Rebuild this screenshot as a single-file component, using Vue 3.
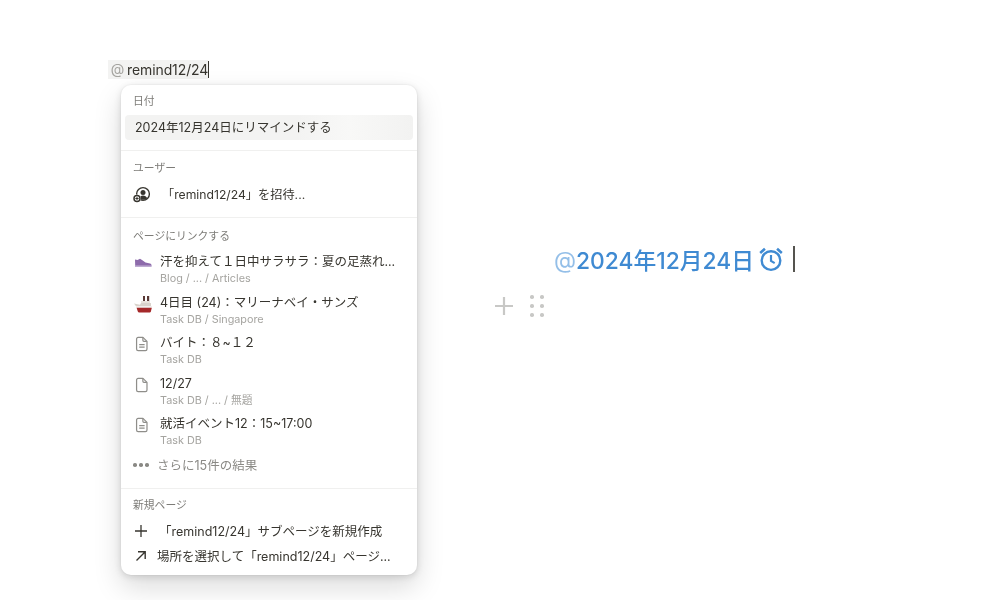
<script setup>
const pages = [
  { icon: 'shoe', title: '汗を抑えて１日中サラサラ：夏の足蒸れ...', path: 'Blog / ... / Articles' },
  { icon: 'ship', title: '4日目 (24)：マリーナベイ・サンズ', path: 'Task DB / Singapore' },
  { icon: 'doc', title: 'バイト：８~１２', path: 'Task DB' },
  { icon: 'blank', title: '12/27', path: 'Task DB / ... / 無題' },
  { icon: 'doc', title: '就活イベント12：15~17:00', path: 'Task DB' },
]
</script>

<template>
  <div class="page">
    <div class="left">
      <div class="query"><span class="at">@</span><span class="qtext">remind12/24</span><span class="caret"></span></div>
      <div class="menu">
        <section class="sec sec-date">
          <div class="label">日付</div>
          <div class="row hl">2024年12月24日にリマインドする</div>
        </section>
        <section class="sec sec-user">
          <div class="label">ユーザー</div>
          <div class="row user">
            <svg class="ic-user" width="20" height="18" viewBox="0 0 20 18">
              <circle cx="11" cy="8" r="6.4" fill="none" stroke="#37352f" stroke-width="1.4"/>
              <circle cx="11" cy="6.4" r="2.5" fill="#37352f"/>
              <path d="M6.8 12.2c.8-2 2.4-2.8 4.2-2.8s3.4.8 4.2 2.8c-1.2 1-2.6 1.6-4.2 1.6s-3-.6-4.2-1.6z" fill="#37352f"/>
              <circle cx="5" cy="12.5" r="4" fill="#fff"/>
              <circle cx="5" cy="12.5" r="3" fill="none" stroke="#37352f" stroke-width="1.5"/>
              <path d="M3.4 12.5h3.2M5 10.9v3.2" stroke="#37352f" stroke-width="1"/>
            </svg>
            <span>「remind12/24」を招待...</span>
          </div>
        </section>
        <section class="sec sec-pages">
          <div class="label">ページにリンクする</div>
          <div v-for="p in pages" :key="p.title" class="item">
            <div class="item-ic">
              <svg v-if="p.icon === 'shoe'" width="18" height="10" viewBox="0 0 18 10">
                <path d="M1 1.5l2.5.5L6 .8l2 1.2 3.5 2.4 4.5 1.2c1 .3 1.5 1 1.5 1.9v.3H1.2z" fill="#8d6bab"/>
                <path d="M1 7.6h16.6v1.2H1z" fill="#a98fc2"/>
              </svg>
              <svg v-else-if="p.icon === 'ship'" class="ship" width="20" height="20" viewBox="0 0 20 20">
                <path d="M10 1h2v5h-2zM14 1h2.2v5H14z" fill="#5b3a36"/>
                <path d="M8 6h9v4H8z" fill="#e9e3dc"/>
                <path d="M1 8.5l6 1.2L8 8h10v4H3.5z" fill="#d9d3cc"/>
                <path d="M2.8 11h16.4l-1.2 2H3.6z" fill="#f1efec"/>
                <path d="M3.6 12.8h15.2l-.9 3.7c-.2.7-.8 1-1.5 1H6.6c-.9 0-1.6-.4-1.9-1.2z" fill="#a5292a"/>
              </svg>
              <svg v-else class="file" width="14" height="16" viewBox="0 0 16 18" fill="none" stroke="#8f8e8a" stroke-width="1.4" stroke-linejoin="round">
                <path d="M3.6 1.4h5.5l4.6 4.6v8.8c0 1-.8 1.8-1.8 1.8H3.6c-1 0-1.8-.8-1.8-1.8V3.2c0-1 .8-1.8 1.8-1.8z"/>
                <path d="M9 1.6v3.2c0 .8.5 1.2 1.2 1.2h3.3"/>
                <path v-if="p.icon === 'doc'" d="M4.8 9.6h6.2M4.8 12.6h6.2"/>
              </svg>
            </div>
            <div class="item-text">
              <div class="item-title">{{ p.title }}</div>
              <div class="item-path">{{ p.path }}</div>
            </div>
          </div>
          <div class="more">
            <span class="dots"><i></i><i></i><i></i></span>
            <span>さらに15件の結果</span>
          </div>
        </section>
        <section class="sec sec-new">
          <div class="label">新規ページ</div>
          <div class="row new new-plus">
            <svg width="14" height="14" viewBox="0 0 14 14"><path d="M7 1v12M1 7h12" stroke="#37352f" stroke-width="1.3"/></svg>
            <span>「remind12/24」サブページを新規作成</span>
          </div>
          <div class="row new new-arrow">
            <svg width="12" height="12" viewBox="0 0 12 12" fill="none"><path d="M1.5 10.5L10 2M3 1.8h7.2V9" stroke="#37352f" stroke-width="1.4"/></svg>
            <span>場所を選択して「remind12/24」ページ...</span>
          </div>
        </section>
      </div>
    </div>
    <div class="right">
      <div class="mention">
        <span class="m-at">@</span><span>2024年12月24日</span>
        <svg class="clock" width="26" height="26" viewBox="0 0 24 24" fill="none" stroke="#3f8ad2" stroke-width="2.2">
          <circle cx="12" cy="13.4" r="8.6"/>
          <path d="M12 8.2v5.6l3.4 2" stroke-width="2"/>
          <path d="M2 6.4l4.4-3.8M22 6.4l-4.4-3.8" stroke-width="2.4"/>
        </svg>
        <span class="big-caret"></span>
      </div>
      <div class="handles">
        <svg width="20" height="20" viewBox="0 0 20 20"><path d="M10 1v18M1 10h18" stroke="#c8c8c6" stroke-width="2.2"/></svg>
        <span class="grip"><i v-for="n in 6" :key="n"></i></span>
      </div>
    </div>
  </div>
</template>

<style>
html, body { margin: 0; background: #fff; }
</style>

<style scoped>
.page {
  width: 1000px;
  height: 600px;
  overflow: hidden;
  display: flex;
  background: #fff;
  font-family: Inter, "Noto Sans CJK JP", sans-serif;
  color: #37352f;
  box-sizing: border-box;
  filter: blur(0.3px);
}
.left { width: 417px; padding: 60px 0 0 108px; box-sizing: border-box; flex: none; }
.query {
  display: flex;
  align-items: center;
  height: 19px;
  width: 100px;
  font-size: 14px;
  letter-spacing: -0.1px;
}
.at {
  width: 19px;
  height: 19px;
  line-height: 17px;
  text-align: center;
  color: #a6a5a1;
  background: #f3f3f2;
  font-size: 14px;
  flex: none;
}
.qtext { background: #f3f3f2; line-height: 19px; padding-left: 0; }
.caret { width: 1px; height: 17px; background: #37352f; flex: none; }
.menu {
  width: 296px;
  height: 490px;
  margin: 6px 0 0 13px;
  background: #fff;
  border-radius: 10px;
  box-shadow: 0 12px 28px rgba(15, 15, 15, .15), 0 2px 7px rgba(15, 15, 15, .13), 0 0 0 1px rgba(15, 15, 15, .02);
  overflow: hidden;
  position: relative;
}
.sec { border-bottom: 1px solid #f0f0ef; box-sizing: border-box; }
.sec:last-child { border-bottom: 0; }
.sec-date { height: 66px; padding-top: 10px; }
.sec-user { height: 67px; padding-top: 11px; }
.sec-pages { height: 271px; padding-top: 12px; }
.sec-new { padding-top: 10px; }
.label {
  font-size: 10.8px;
  line-height: 14px;
  color: #7d7c78;
  padding-left: 12px;
}
.row { font-size: 12.5px; display: flex; align-items: center; }
.hl {
  height: 25px;
  margin: 6px 4px 0;
  padding: 0 0 2px 10px;
  box-sizing: border-box;
  border-radius: 4px;
  background: linear-gradient(90deg, #f3f3f2 0%, #f3f3f2 60%, #f8f8f7 78%, #f2f2f1 100%);
}
.user { height: 24px; margin-top: 6px; padding-left: 11px; font-size: 12.2px; }
.ic-user { flex: none; margin-right: 10px; margin-top: 1px; width: 20px; }
.item {
  display: flex;
  height: 40.6px;
  padding-left: 12px;
}
.sec-pages .label { margin-bottom: 8px; }
.item-ic {
  width: 27px;
  height: 22px;
  flex: none;
  display: flex;
  align-items: center;
  padding-left: 1px;
  box-sizing: border-box;
}
.item-ic svg { flex: none; }
.item-ic .file { margin-left: 1px; }
.item-ic .ship { margin-top: 3px; margin-left: -1px; }
.item-text { min-width: 0; }
.item-title { font-size: 12.5px; line-height: 20px; white-space: nowrap; }
.item-path { font-size: 10.8px; line-height: 14px; color: #a5a4a0; margin-top: 0; white-space: nowrap; }
.more {
  display: flex;
  align-items: center;
  height: 20px;
  font-size: 12.5px;
  color: #8a8985;
  padding-left: 12px;
}
.dots { display: flex; gap: 2.5px; width: 24px; flex: none; }
.dots i { width: 3.5px; height: 3.5px; border-radius: 50%; background: #8a8985; }
.new { height: 25px; }
.new-plus { margin-top: 5px; padding-left: 13px; }
.new-plus svg { margin-right: 11px; flex: none; }
.new-arrow { padding-left: 14px; }
.new-arrow svg { margin-right: 10px; flex: none; }
.right { padding: 244px 0 0 137px; flex: none; }
.mention {
  display: flex;
  align-items: center;
  height: 30px;
  font-size: 22.8px;
  font-weight: 450;
  color: #3f8ad2;
  white-space: nowrap;
}
.m-at { color: #94bfe8; font-weight: 400; }
.clock { margin-left: 4px; flex: none; }
.big-caret { width: 2px; height: 26px; background: #55544f; margin-left: 9px; }
.handles { display: flex; align-items: center; margin: 21px 0 0 -60px; gap: 16px; }
.grip { display: grid; grid-template-columns: 3.5px 3.5px; gap: 5.5px 6.5px; }
.grip i { width: 3.5px; height: 3.5px; border-radius: 50%; background: #c8c8c6; }
</style>
